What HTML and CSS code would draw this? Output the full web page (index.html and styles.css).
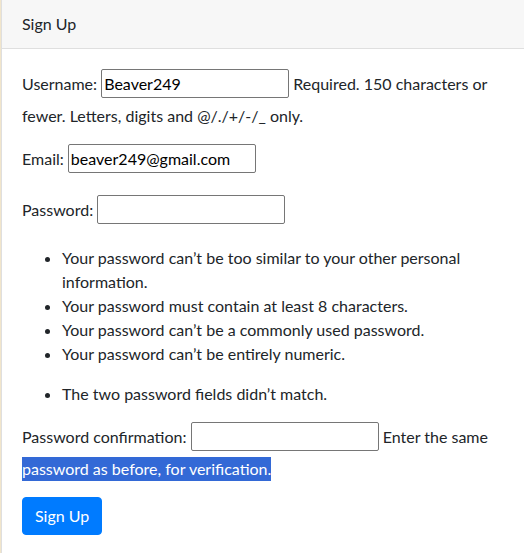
FILE: index.html
```html
<!DOCTYPE html>
<html lang="en">
<head>
<meta charset="utf-8">
<title>Sign Up</title>
<link rel="stylesheet" href="styles.css">
</head>
<body>
<div class="page">
  <div class="card">
    <div class="card-header">Sign Up</div>
    <div class="card-body">
      <form class="signup">
        <p class="field"><label for="id_username">Username:</label> <input class="input" type="text" id="id_username" value="Beaver249"> Required. 150 characters or fewer. Letters, digits and @/./+/-/_ only.</p>
        <p class="field"><label for="id_email">Email:</label> <input class="input" type="email" id="id_email" value="beaver249@gmail.com"></p>
        <p class="field"><label for="id_password1">Password:</label> <input class="input" type="password" id="id_password1"></p>
        <ul class="list">
          <li>Your password can’t be too similar to your other personal information.</li>
          <li>Your password must contain at least 8 characters.</li>
          <li>Your password can’t be a commonly used password.</li>
          <li>Your password can’t be entirely numeric.</li>
        </ul>
        <ul class="list">
          <li>The two password fields didn’t match.</li>
        </ul>
        <p class="field"><label for="id_password2">Password confirmation:</label> <input class="input" type="password" id="id_password2"> Enter the same <span class="selected">password as before, for verification.</span></p>
        <button class="btn" type="submit">Sign Up</button>
      </form>
    </div>
  </div>
</div>
</body>
</html>
```

FILE: styles.css
```css
html, body {
  margin: 0;
  padding: 0;
  background: #ffffff;
}

body {
  font-family: "Segoe UI", Lato, "Noto Sans", sans-serif;
  font-size: 16px;
  line-height: 24px;
  color: #212529;
}

.page {
  background: #f1e5cb;
  padding-left: 1px;
  min-height: 553px;
  box-sizing: border-box;
}

.card {
  background: #ffffff;
  border-left: 1px solid #dfdfdf;
  min-height: 553px;
}

.card-header {
  background: #f7f7f7;
  border-bottom: 1px solid #dfdfdf;
  padding: 12px 20px;
  line-height: 24px;
}

.card-body {
  padding: 20px;
}

.field {
  margin: 0 0 16px 0;
}

.input {
  box-sizing: border-box;
  width: 188px;
  height: 29px;
  margin: 0 0 6px 0;
  padding: 1px 2px;
  border: 1px solid #767676;
  border-radius: 2px;
  font-family: inherit;
  font-size: 16px;
  line-height: 24px;
  color: #000000;
  background: #ffffff;
}

.list {
  margin: 0 0 16px 0;
  padding-left: 40px;
}

.selected {
  display: inline-block;
  background: #3369d6;
  color: #ffffff;
  line-height: 24px;
}

.btn {
  display: inline-block;
  font-family: inherit;
  font-size: 16px;
  line-height: 24px;
  padding: 6px 12px;
  color: #ffffff;
  background: #007bff;
  border: 1px solid #007bff;
  border-radius: 4px;
  cursor: pointer;
}
```
